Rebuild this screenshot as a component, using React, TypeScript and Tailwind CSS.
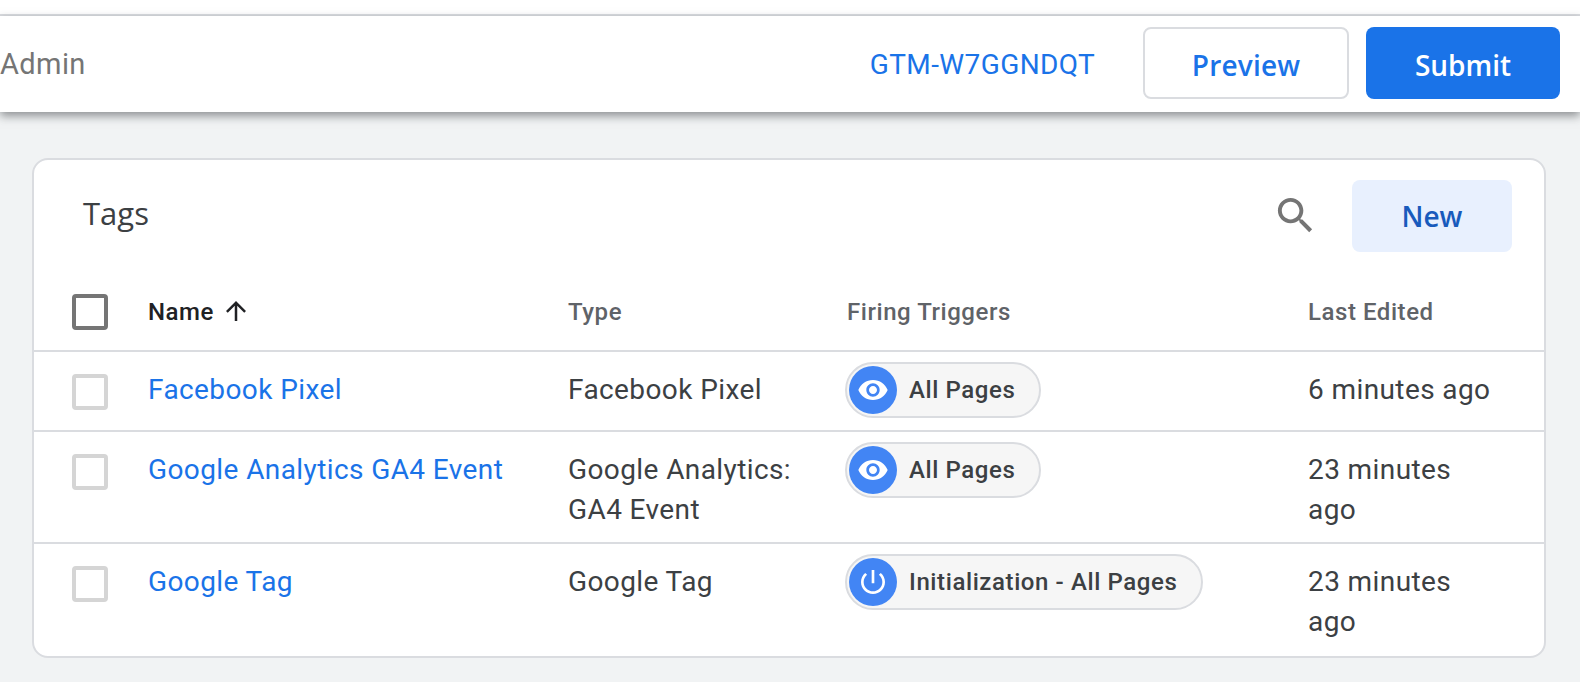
const tags = [
  { name: "Facebook Pixel", type: "Facebook Pixel", trigger: "All Pages", icon: "eye", edited: "6 minutes ago", height: "h-[80px]" },
  { name: "Google Analytics GA4 Event", type: "Google Analytics: GA4 Event", trigger: "All Pages", icon: "eye", edited: "23 minutes ago", height: "h-[112px]" },
  { name: "Google Tag", type: "Google Tag", trigger: "Initialization - All Pages", icon: "power", edited: "23 minutes ago", height: "h-[113px]" },
];

const EyeIcon = () => (
  <svg viewBox="0 0 24 24" className="w-[32px] h-[32px]" fill="#fff">
    <path d="M12 4.5C7 4.5 2.73 7.61 1 12c1.73 4.39 6 7.5 11 7.5s9.27-3.11 11-7.5c-1.73-4.39-6-7.5-11-7.5zM12 17c-2.76 0-5-2.24-5-5s2.24-5 5-5 5 2.24 5 5-2.24 5-5 5zm0-8c-1.66 0-3 1.34-3 3s1.34 3 3 3 3-1.34 3-3-1.34-3-3-3z" />
  </svg>
);

const PowerIcon = () => (
  <svg viewBox="0 0 24 24" className="w-[32px] h-[32px]" fill="#fff">
    <path d="M13 3h-2v10h2V3zm4.83 2.17l-1.42 1.42C17.99 7.86 19 9.81 19 12c0 3.87-3.13 7-7 7s-7-3.13-7-7c0-2.19 1.01-4.14 2.58-5.42L6.17 5.17C4.23 6.82 3 9.26 3 12c0 4.97 4.03 9 9 9s9-4.03 9-9c0-2.74-1.23-5.18-3.17-6.83z" />
  </svg>
);

const App = () => {
  return (
    <div className="h-[682px] w-[1580px] overflow-hidden bg-[#f1f3f4] font-['Roboto',sans-serif] text-[#3c4043]">
      <div className="h-[16px] bg-white border-b-2 border-[#dadce0]" />
      <header className="relative h-[96px] pb-[2px] bg-white flex items-center shadow-[0_4px_9px_rgba(60,64,67,0.55)]">
        <span className="pt-[3px] text-[29px] text-[#757575] tracking-[0.4px]">Admin</span>
        <span className="ml-auto pt-[3px] text-[28px] text-[#1a73e8] tracking-[0.4px]">GTM-W7GGNDQT</span>
        <button className="ml-[48px] pt-[3px] w-[206px] h-[72px] rounded-[8px] border-2 border-[#dadce0] bg-white text-[28px] font-semibold tracking-[0.2px] text-[#1a73e8] font-['Open_Sans',sans-serif]">
          Preview
        </button>
        <button className="ml-[17px] mr-[20px] pt-[3px] w-[194px] h-[72px] rounded-[8px] bg-[#1a73e8] text-[28px] font-semibold text-white font-['Open_Sans',sans-serif]">
          Submit
        </button>
      </header>

      <main className="ml-[32px] mt-[46px] w-[1514px] h-[500px] rounded-[16px] border-2 border-[#dadce0] bg-white overflow-hidden">
        <div className="flex items-start pt-[20px] pl-[49px] pr-[32px] h-[110px]">
          <h1 className="mt-[13px] text-[31px] leading-[40px] font-['Open_Sans',sans-serif]">Tags</h1>
          <svg viewBox="0 0 24 24" className="ml-auto mt-[12px] w-[47px] h-[47px]" fill="#757575">
            <path d="M15.5 14h-.79l-.28-.27C15.41 12.59 16 11.11 16 9.5 16 5.91 13.09 3 9.5 3S3 5.91 3 9.5 5.91 16 9.5 16c1.61 0 3.09-.59 4.23-1.57l.27.28v.79l5 4.99L20.49 19l-4.99-5zm-6 0C7.01 14 5 11.99 5 9.5S7.01 5 9.5 5 14 7.01 14 9.5 11.99 14 9.5 14z" />
          </svg>
          <button className="ml-[33px] w-[160px] h-[72px] rounded-[8px] bg-[#e8f0fe] text-[28px] font-semibold text-[#185abc] font-['Open_Sans',sans-serif]">
            New
          </button>
        </div>

        <div className="flex items-center h-[80px] pt-[4px] pl-[38px] text-[24px] font-medium tracking-[0.55px] text-[#5f6368]">
          <div className="w-[36px] h-[36px] mr-[40px] rounded-[4px] border-[4px] border-[#757575]" />
          <div className="w-[420px] flex items-center text-[#202124]">
            Name
            <svg viewBox="0 0 24 24" className="ml-[7px] -mt-[2px] w-[30px] h-[30px]" fill="#202124">
              <path d="M4 12l1.41 1.41L11 7.83V20h2V7.83l5.58 5.59L20 12l-8-8-8 8z" />
            </svg>
          </div>
          <div className="w-[279px]">Type</div>
          <div className="w-[461px]">Firing Triggers</div>
          <div>Last Edited</div>
        </div>

        {tags.map((tag) => (
          <div key={tag.name} className={`flex items-start border-t-2 border-[#dadce0] pl-[38px] pt-[18px] text-[28px] leading-[40px] tracking-[0.4px] ${tag.height}`}>
            <div className="w-[36px] h-[36px] mt-[4px] mr-[40px] rounded-[4px] border-[4px] border-[#d5d5d5]" />
            <a className="w-[420px] text-[#1a73e8]">{tag.name}</a>
            <div className="w-[277px] pr-[30px]">{tag.type}</div>
            <div className="w-[463px]">
              <div className="inline-flex items-center -mt-[8px] h-[56px] pl-[2px] pr-[24px] rounded-full border-2 border-[#dadce0] bg-[#f6f6f6] align-top">
                <span className="w-[48px] h-[48px] rounded-full bg-[#4285f4] flex items-center justify-center">
                  {tag.icon === "eye" ? <EyeIcon /> : <PowerIcon />}
                </span>
                <span className="ml-[12px] text-[24px] font-medium tracking-[0.6px]">{tag.trigger}</span>
              </div>
            </div>
            <div className="w-[190px]">{tag.edited}</div>
          </div>
        ))}
      </main>
    </div>
  );
};

export default App;
